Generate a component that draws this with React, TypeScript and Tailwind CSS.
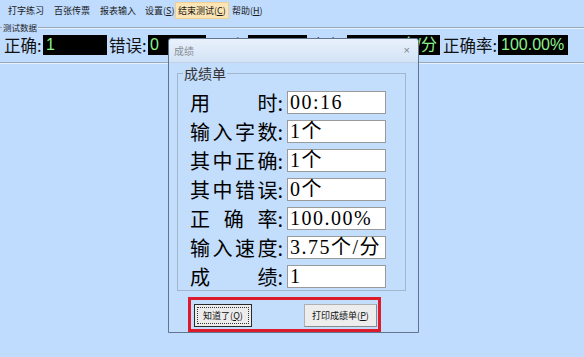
import React from "react";

const cjk = "font-['Noto_Sans_CJK_SC',sans-serif]";
const serifVal = "font-['Liberation_Serif','Noto_Sans_CJK_SC',serif]";
const sansVal = "font-['Liberation_Sans','Noto_Sans_CJK_SC',sans-serif]";

function Label({ chars }: { chars: string[] }) {
  return (
    <div className="w-[93px] flex justify-between text-[20px] leading-[23px] text-black">
      {chars.map((c, i) => (
        <span key={i}>{c}</span>
      ))}
    </div>
  );
}

const rows: { chars: string[]; value: string }[] = [
  { chars: ["用", "时:"], value: "00:16" },
  { chars: ["输", "入", "字", "数:"], value: "1个" },
  { chars: ["其", "中", "正", "确:"], value: "1个" },
  { chars: ["其", "中", "错", "误:"], value: "0个" },
  { chars: ["正", "确", "率:"], value: "100.00%" },
  { chars: ["输", "入", "速", "度:"], value: "3.75个/分" },
  { chars: ["成", "绩:"], value: "1" },
];

function TopLabel({ text, w }: { text: string; w: string }) {
  return (
    <div className={`${w} shrink-0 h-[20px] flex items-center whitespace-nowrap text-[16.5px] leading-[20px] text-[#111]`}>
      {text}
    </div>
  );
}

export default function App() {
  return (
    <div className={`relative w-[584px] h-[357px] overflow-hidden bg-[#bfdbfe] ${cjk}`}>
      {/* menu bar */}
      <div className="h-[21px] flex items-center pl-[8px] text-[9px] text-[#1a1a1a] whitespace-nowrap">
        <div className="w-[46px]">打字练习</div>
        <div className="w-[46px]">百张传票</div>
        <div className="w-[45px]">报表输入</div>
        <div className="w-[30px]">设置(<span className="underline">S</span>)</div>
        <div className="w-[54px] h-[17px] flex items-center pl-[2px] bg-[#fce5b4] border border-[#efcf94]">
          结束测试(<span className="underline">C</span>)
        </div>
        <div className="ml-[3px]">帮助(<span className="underline">H</span>)</div>
      </div>

      {/* test data group */}
      <div className="h-[12px] flex items-center">
        <div className="w-[2px] border-t border-[#9aa9b8]" />
        <div className="px-[1px] text-[8.5px] leading-[12px] text-[#222] whitespace-nowrap">测试数据</div>
        <div className="flex-1 border-t border-[#9aa9b8] shadow-[0_1px_0_#e4efff]" />
      </div>
      <div className="mt-[2px] h-[20px] flex pl-[4px]">
        <TopLabel text="正确:" w="w-[39px]" />
        <div className={`w-[64px] shrink-0 h-[20px] bg-black text-[#8cf08c] pl-[3px] text-[16px] leading-[20px] ${sansVal}`}>1</div>
        <TopLabel text="错误:" w="w-[41px] pl-[2px]" />
        <div className={`w-[58px] shrink-0 h-[20px] bg-black text-[#8cf08c] pl-[2px] text-[16px] leading-[20px] ${sansVal}`}>0</div>
        <TopLabel text="用时:" w="w-[42px] pl-[2px]" />
        <div className={`w-[59px] shrink-0 h-[20px] bg-black text-[#8cf08c] pl-[2px] text-[16px] leading-[20px] ${sansVal}`}>00:16</div>
        <TopLabel text="速度:" w="w-[40px] pl-[1px]" />
        <div className={`w-[93px] shrink-0 h-[20px] bg-black text-[#8cf08c] pr-[3px] text-right text-[16px] leading-[20px] whitespace-nowrap ${sansVal}`}>3.75个/分</div>
        <TopLabel text="正确率:" w="w-[58px] pl-[3px]" />
        <div className={`w-[70px] shrink-0 h-[20px] bg-black text-[#8cf08c] pl-[3px] text-[16px] leading-[20px] ${sansVal}`}>100.00%</div>
      </div>
      <div className="mt-[7px] border-t border-[#9aa9b8] shadow-[0_1px_0_#e4efff]" />

      {/* dialog */}
      <div className="absolute left-[168px] top-[38px] w-[251px] h-[295px] border border-[#5f7590] rounded-t-[3px] bg-[#c3ddfc] flex flex-col">
        <div className="h-[24px] shrink-0 flex items-center justify-between pl-[5px] pr-[8px] bg-gradient-to-b from-[#e9f1fb] to-[#d3e3f6] rounded-t-[3px] border-b border-[#c2d3e8]">
          <span className="text-[10px] text-[#8a8f96]">成绩</span>
          <span className={`text-[11px] leading-[11px] text-[#7d8590] ${sansVal}`}>×</span>
        </div>
        <div className="relative ml-[8px] mt-[10px] w-[229px] h-[220px] border border-[#a3b6cc] pt-[17px] pl-[12px] flex flex-col gap-[6px]">
          <div className="absolute left-[5px] top-[-9px] px-[1px] bg-[#c3ddfc] text-[14px] leading-[16px] text-[#333]">成绩单</div>
          {rows.map((r, i) => (
            <div key={i} className="flex items-center gap-[4px] h-[23px]">
              <Label chars={r.chars} />
              <div className={`w-[99px] h-[23px] bg-white border border-[#9a9a9a] pl-[2px] text-[20px] leading-[21px] tracking-[1.5px] text-black whitespace-nowrap ${serifVal}`}>
                {r.value}
              </div>
            </div>
          ))}
        </div>
        <div className="ml-[19px] mt-[6px] w-[193px] h-[35px] border-[3px] border-[#dc1c2c] flex justify-between pl-[3px] pr-[1px] pt-[4px]">
          <div className="w-[58px] h-[23px] border border-[#2a2a2a] bg-[#ececec] p-[2px]">
            <div className="w-full h-full border border-dotted border-[#333] flex items-center justify-center text-[9px] text-[#111] whitespace-nowrap">
              知道了(<span className="underline">Q</span>)
            </div>
          </div>
          <div className="w-[73px] h-[23px] border border-[#b0b0b0] border-r-[#8a8a8a] border-b-[#8a8a8a] bg-[#ededed] flex items-center justify-center text-[9px] text-[#111] whitespace-nowrap">
            打印成绩单(<span className="underline">P</span>)
          </div>
        </div>
      </div>
    </div>
  );
}
